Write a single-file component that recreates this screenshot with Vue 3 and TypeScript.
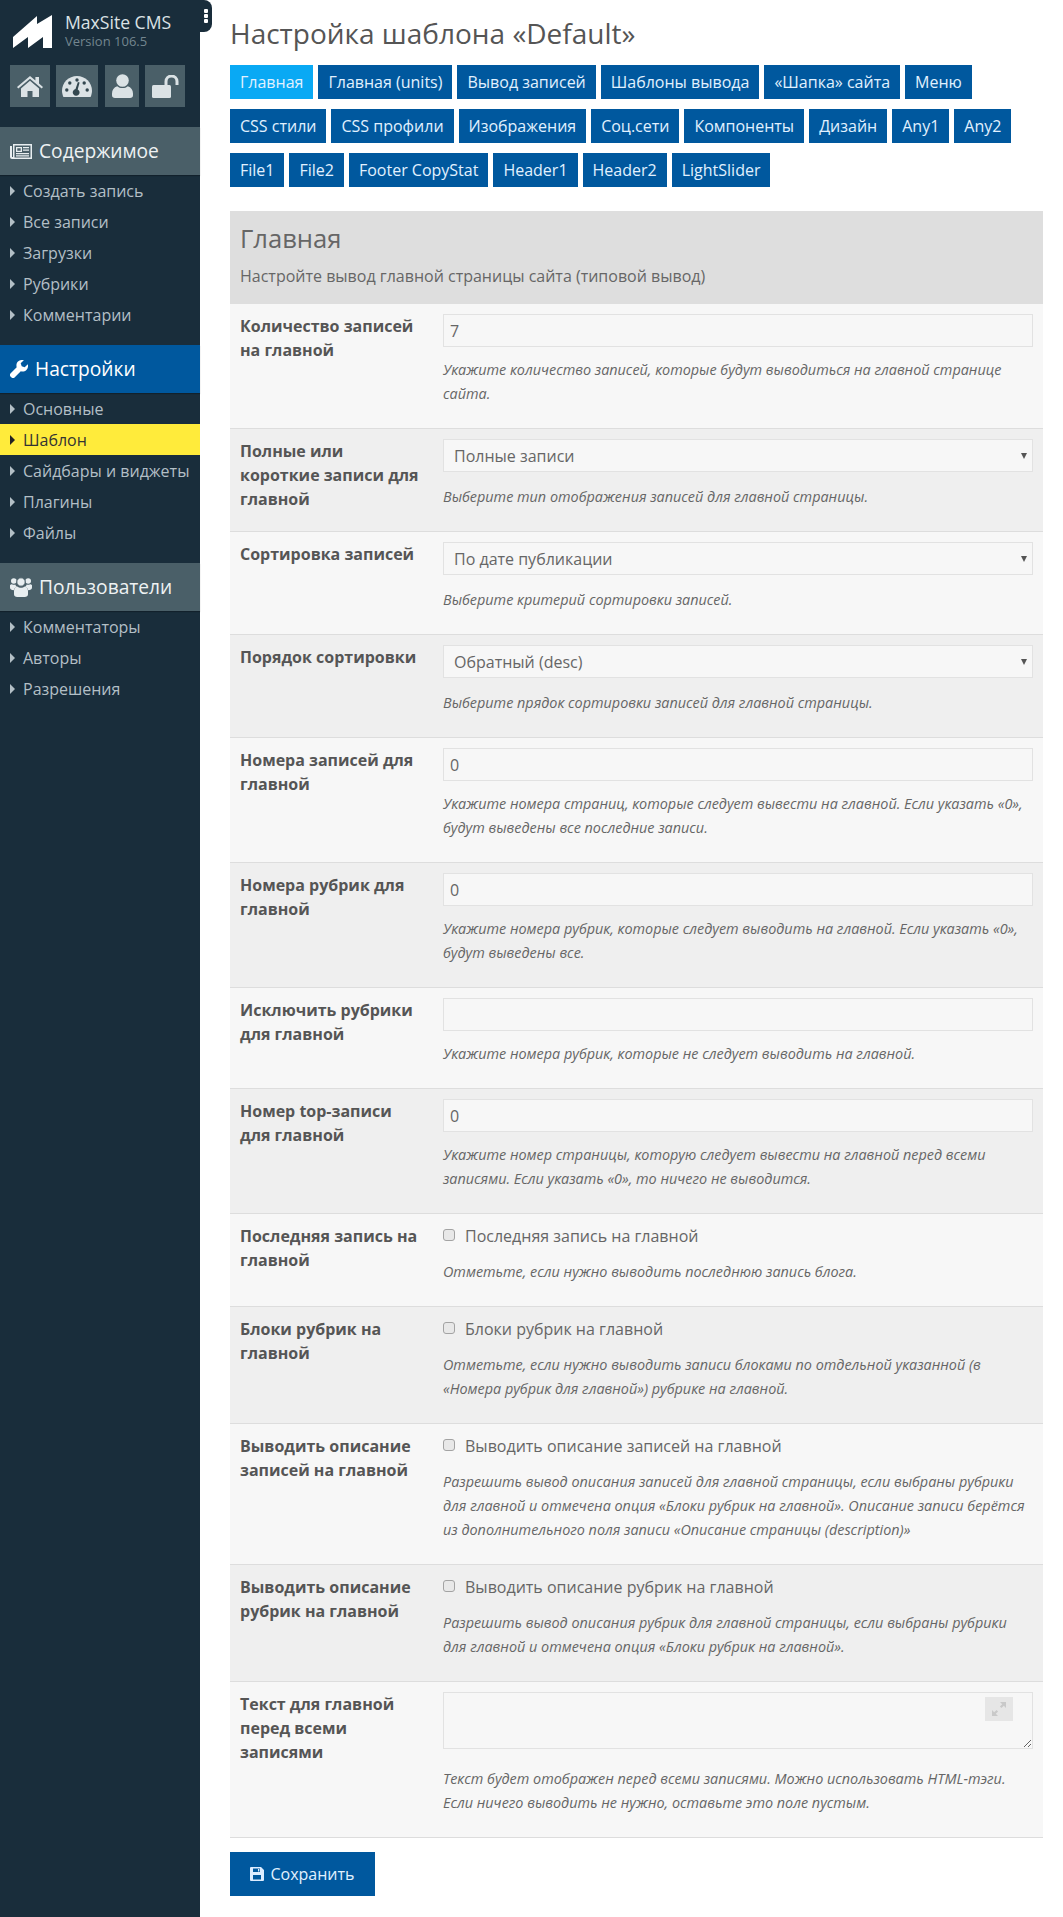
<script setup lang="ts">
interface MenuGroup { title: string; icon: string; active?: boolean; items: string[] }
interface Row {
  label: string;
  kind: 'input' | 'select' | 'check' | 'area';
  value?: string;
  hint: string;
}

const groups: MenuGroup[] = [
  { title: 'Содержимое', icon: 'news', items: ['Создать запись', 'Все записи', 'Загрузки', 'Рубрики', 'Комментарии'] },
  { title: 'Настройки', icon: 'wrench', active: true, items: ['Основные', 'Шаблон', 'Сайдбары и виджеты', 'Плагины', 'Файлы'] },
  { title: 'Пользователи', icon: 'users', items: ['Комментаторы', 'Авторы', 'Разрешения'] },
];

const tabs: string[][] = [
  ['Главная', 'Главная (units)', 'Вывод записей', 'Шаблоны вывода', '«Шапка» сайта', 'Меню'],
  ['CSS стили', 'CSS профили', 'Изображения', 'Соц.сети', 'Компоненты', 'Дизайн', 'Any1', 'Any2'],
  ['File1', 'File2', 'Footer CopyStat', 'Header1', 'Header2', 'LightSlider'],
];

const rows: Row[] = [
  { label: 'Количество записей на главной', kind: 'input', value: '7', hint: 'Укажите количество записей, которые будут выводиться на главной странице сайта.' },
  { label: 'Полные или короткие записи для главной', kind: 'select', value: 'Полные записи', hint: 'Выберите тип отображения записей для главной страницы.' },
  { label: 'Сортировка записей', kind: 'select', value: 'По дате публикации', hint: 'Выберите критерий сортировки записей.' },
  { label: 'Порядок сортировки', kind: 'select', value: 'Обратный (desc)', hint: 'Выберите прядок сортировки записей для главной страницы.' },
  { label: 'Номера записей для главной', kind: 'input', value: '0', hint: 'Укажите номера страниц, которые следует вывести на главной. Если указать «0», будут выведены все последние записи.' },
  { label: 'Номера рубрик для главной', kind: 'input', value: '0', hint: 'Укажите номера рубрик, которые следует выводить на главной. Если указать «0», будут выведены все.' },
  { label: 'Исключить рубрики для главной', kind: 'input', value: '', hint: 'Укажите номера рубрик, которые не следует выводить на главной.' },
  { label: 'Номер top-записи для главной', kind: 'input', value: '0', hint: 'Укажите номер страницы, которую следует вывести на главной перед всеми записями. Если указать «0», то ничего не выводится.' },
  { label: 'Последняя запись на главной', kind: 'check', value: 'Последняя запись на главной', hint: 'Отметьте, если нужно выводить последнюю запись блога.' },
  { label: 'Блоки рубрик на главной', kind: 'check', value: 'Блоки рубрик на главной', hint: 'Отметьте, если нужно выводить записи блоками по отдельной указанной (в «Номера рубрик для главной») рубрике на главной.' },
  { label: 'Выводить описание записей на главной', kind: 'check', value: 'Выводить описание записей на главной', hint: 'Разрешить вывод описания записей для главной страницы, если выбраны рубрики для главной и отмечена опция «Блоки рубрик на главной». Описание записи берётся из дополнительного поля записи «Описание страницы (description)»' },
  { label: 'Выводить описание рубрик на главной', kind: 'check', value: 'Выводить описание рубрик на главной', hint: 'Разрешить вывод описания рубрик для главной страницы, если выбраны рубрики для главной и отмечена опция «Блоки рубрик на главной».' },
  { label: 'Текст для главной перед всеми записями', kind: 'area', hint: 'Текст будет отображен перед всеми записями. Можно использовать HTML-тэги. Если ничего выводить не нужно, оставьте это поле пустым.' },
];
</script>

<template>
  <div class="page">
    <aside class="side">
      <div class="handle"><i></i><i></i><i></i></div>
      <div class="brand">
        <svg class="logo" viewBox="0 0 39 33" width="39" height="33">
          <path fill="#fff" d="M0 33V22L24 1v8L39 0v33H30V22L15 33V22L0 33Z" />
        </svg>
        <div class="brand-text">
          <div class="brand-name">MaxSite CMS</div>
          <div class="brand-ver">Version 106.5</div>
        </div>
      </div>
      <div class="quick">
        <a class="q q-home">
          <svg viewBox="0 0 26 21" width="26" height="21"><path fill="#dbe2e5" d="M13 0 0 11l1.300 1.600L13 2.800l11.700 9.800L26 11l-4-3.400V1h-3.600v3.500L13 0Z" /><path fill="#dbe2e5" d="M13 4.800 4 12.400V21h6.500v-6h5v6H22v-8.600L13 4.800Z" /></svg>
        </a>
        <a class="q q-gauge">
          <svg viewBox="0 0 30 21" width="30" height="21"><path fill="#dbe2e5" d="M15 0C6.700 0 0 6.500 0 14.600c0 2.300.5 4.400 1.400 6.400h27.200c.9-2 1.400-4.100 1.400-6.400C30 6.500 23.300 0 15 0Z" /><g fill="#33474f"><circle cx="15" cy="4" r="1.700" /><circle cx="7.800" cy="7" r="1.700" /><circle cx="22.200" cy="7" r="1.700" /><circle cx="4.800" cy="14" r="1.700" /><circle cx="25.200" cy="14" r="1.700" /><path d="M17.600 6.500 15.700 13.400a3.400 3.400 0 1 1-2.200-.3l2.400-7Z" /></g></svg>
        </a>
        <a class="q q-user">
          <svg viewBox="0 0 21 24" width="21" height="24"><circle cx="10.500" cy="6.500" r="6.300" fill="#dbe2e5" /><path fill="#dbe2e5" d="M5.200 12.200C2 13.200 0 15.800 0 19.600v1.600C0 23 1.200 24 3 24h15c1.800 0 3-1 3-2.800v-1.600c0-3.800-2-6.400-5.200-7.400-1.400 1.200-3.200 1.900-5.300 1.900s-3.900-.7-5.300-1.900Z" /></svg>
        </a>
        <a class="q q-lock">
          <svg viewBox="0 0 27 23" width="27" height="23"><rect x="0" y="10" width="19" height="13" rx="1.500" fill="#dbe2e5" /><path fill="none" stroke="#dbe2e5" stroke-width="3" d="M14 10V6.500a5 5 0 0 1 11 0V10" /></svg>
        </a>
      </div>

      <div v-for="g in groups" :key="g.title" class="group">
        <div class="group-head" :class="{ on: g.active }">
          <svg v-if="g.icon === 'news'" viewBox="0 0 22 15" width="22" height="15"><path fill="#e8eef0" fill-rule="evenodd" d="M3 0h19v15H2a2 2 0 0 1-2-2V2h2v11h1V0Zm1.500 1.500v12h16v-12h-16Z" /><path fill="#e8eef0" fill-rule="evenodd" d="M6 3h6v5H6V3Zm1.300 1.300v2.400h3.400V4.300H7.300ZM13 3h6v1.300h-6V3Zm0 2.400h6v1.300h-6V5.400ZM6 9h13v1.300H6V9Zm0 2.300h13v1.300H6v-1.300Z" /></svg>
          <svg v-else-if="g.icon === 'wrench'" viewBox="0 0 18 18" width="18" height="18"><path fill="#fff" d="M17.800 4.200 14.700 7.300l-3-1-1-3L13.800.2C11.700-.4 9.500.1 8 1.600 6.500 3.100 6.100 5.300 6.700 7.200L.7 13.200a2.500 2.500 0 0 0 0 3.500l.6.6a2.500 2.500 0 0 0 3.500 0l6-6c1.900.6 4.100.2 5.600-1.300s2-3.700 1.400-5.800Z" /></svg>
          <svg v-else viewBox="0 0 22 20" width="22" height="20"><g fill="#e8eef0"><circle cx="3.800" cy="4" r="2.800" /><circle cx="18.200" cy="4" r="2.800" /><circle cx="11" cy="5" r="4.200" stroke="#4a5f68" stroke-width="1" /><path d="M0 8.200C.6 7.500 1.300 7.200 2.300 7.400c1 .5 2 .5 3 .1.300 1 1 2 1.900 2.600C5 10.700 4 12 3.800 13.300 1.500 13.200 0 12.200 0 10.500V8.200ZM22 8.200c-.6-.7-1.300-1-2.300-.8-1 .5-2 .5-3 .1-.3 1-1 2-1.900 2.600 2.200.6 3.200 1.900 3.400 3.200 2.300-.1 3.800-1.100 3.800-2.800V8.200Z" /><path d="M7.200 9.500c2.200 1.800 5.400 1.800 7.600 0 2 .6 3.200 2.300 3.200 4.500v3.200c0 1.700-1.500 2.800-3.200 2.800H7.200C5.500 20 4 18.900 4 17.200V14c0-2.200 1.200-3.900 3.200-4.500Z" /></g></svg>
          <span>{{ g.title }}</span>
        </div>
        <ul class="items">
          <li v-for="it in g.items" :key="it" :class="{ cur: it === 'Шаблон' }">{{ it }}</li>
        </ul>
      </div>
    </aside>

    <main class="main">
      <h1 class="title">Настройка шаблона «Default»</h1>
      <div class="tabs">
        <div v-for="(line, i) in tabs" :key="i" class="tab-line">
          <a v-for="t in line" :key="t" class="tab" :class="{ on: t === 'Главная' }">{{ t }}</a>
        </div>
      </div>

      <section class="head">
        <h2>Главная</h2>
        <p>Настройте вывод главной страницы сайта (типовой вывод)</p>
      </section>

      <div v-for="(r, i) in rows" :key="r.label" class="row" :class="['k-' + r.kind, { alt: i % 2 === 1 }]">
        <div class="label">{{ r.label }}</div>
        <div class="field">
          <input v-if="r.kind === 'input'" class="ctl" type="text" :value="r.value" />
          <div v-else-if="r.kind === 'select'" class="sel-wrap">
            <select class="ctl sel"><option>{{ r.value }}</option></select>
          </div>
          <label v-else-if="r.kind === 'check'" class="chk"><input type="checkbox" /><span>{{ r.value }}</span></label>
          <div v-else class="area-wrap">
            <textarea class="ctl area"></textarea>
            <span class="expand">
              <svg viewBox="0 0 14 14" width="14" height="14"><path fill="#c9c9c9" d="M8 0h6v6l-2.200-2.200-2.300 2.300-1.600-1.600 2.300-2.300L8 0ZM6 14H0V8l2.200 2.200 2.300-2.300 1.600 1.600-2.300 2.300L6 14Z" /></svg>
            </span>
          </div>
          <p class="hint">{{ r.hint }}</p>
        </div>
      </div>

      <button class="save" type="button">
        <svg viewBox="0 0 14 14" width="14" height="14"><path fill="#dcecff" fill-rule="evenodd" d="M1 0h10l3 3v10a1 1 0 0 1-1 1H1a1 1 0 0 1-1-1V1a1 1 0 0 1 1-1Zm2 1.500V5h7V1.500H3Zm5 .5h1.300v2.500H8V2ZM3 8v4.500h8V8H3Z" /></svg>
        <span>Сохранить</span>
      </button>
    </main>
  </div>
</template>

<style>
html, body { margin: 0; background: #fff; }
</style>

<style scoped>
.page {
  display: flex;
  min-height: 1917px;
  font-family: "Open Sans", "Noto Sans", sans-serif;
  font-size: 16px;
  line-height: 24px;
  color: #666;
}
.side {
  width: 200px;
  flex: none;
  background: #192d3b;
  position: relative;
  padding-top: 15px;
  box-sizing: border-box;
}
.handle {
  position: absolute;
  left: 200px;
  top: 0;
  width: 12px;
  height: 32px;
  background: #192d3b;
  border-radius: 0 8px 8px 0;
  display: flex;
  flex-direction: column;
  align-items: center;
  padding-top: 9px;
  box-sizing: border-box;
  gap: 1px;
}
.handle i {
  width: 4px;
  height: 4px;
  border-radius: 1px;
  background: #fff;
}
.brand {
  display: flex;
  padding-left: 13px;
  height: 33px;
  gap: 13px;
}
.logo { flex: none; }
.brand-text { margin-top: -3px; }
.brand-name {
  color: #dbe2e5;
  font-size: 17.600px;
  line-height: 21px;
}
.brand-ver {
  color: #73868f;
  font-size: 13px;
  line-height: 16px;
}
.quick {
  display: flex;
  padding-left: 10px;
  margin-top: 17px;
  gap: 6px;
  height: 42px;
}
.q {
  background: #4a5f68;
  height: 42px;
  display: flex;
  align-items: center;
  justify-content: center;
}
.q-home { width: 40px; }
.q-gauge { width: 42px; }
.q-user { width: 34px; margin-left: 1px; }
.q-lock { width: 40px; }
.group { margin-top: 15px; }
.quick + .group { margin-top: 20px; }
.group-head {
  height: 48px;
  background: #4a5f68;
  color: #eef2f3;
  display: flex;
  align-items: center;
  padding-left: 10px;
  gap: 7px;
  font-size: 19.200px;
  box-shadow: 0 1px 1px rgba(0, 0, 0, .25);
}
.group-head.on {
  background: #00589e;
  color: #fff;
}
.items {
  list-style: none;
  margin: 0;
  padding: 0;
}
.items li {
  height: 31px;
  line-height: 33px;
  padding-left: 23px;
  color: #b3bfc6;
  position: relative;
}
.items li::before {
  content: "";
  position: absolute;
  left: 10px;
  top: 11px;
  border-left: 5px solid #b3bfc6;
  border-top: 5px solid transparent;
  border-bottom: 5px solid transparent;
}
.items li.cur {
  background: #ffeb3b;
  color: #333;
}
.items li.cur::before { border-left-color: #222; }

.main {
  width: 813px;
  margin-left: 30px;
  flex: none;
}
.title {
  margin: 0;
  padding-top: 14px;
  font-size: 28px;
  line-height: 38px;
  font-weight: 400;
  color: #555;
}
.tabs {
  margin-top: 13px;
  display: flex;
  flex-direction: column;
  gap: 10px;
}
.tab-line {
  display: flex;
  gap: 5px;
}
.tab {
  height: 34px;
  line-height: 34px;
  padding: 0 10px;
  background: #00589e;
  color: #e1f1ff;
}
.tab.on { background: #09a9f4; }
.head {
  margin-top: 24px;
  height: 93px;
  background: #dedede;
  padding: 9px 10px 0;
  box-sizing: border-box;
}
.head h2 {
  margin: 0;
  font-size: 25.600px;
  font-weight: 400;
  line-height: 38px;
  color: #666;
}
.head p {
  margin: 6px 0 0;
  color: #666;
}
.row {
  display: flex;
  padding: 10px 10px 12px;
  background: #f7f7f7;
  border-bottom: 1px solid #ddd;
}
.row.alt { background: #efefef; }
.label {
  width: 180px;
  margin-right: 23px;
  flex: none;
  font-weight: 700;
  color: #555;
}
.field {
  flex: 1;
  min-width: 0;
  padding-bottom: 10px;
}
.ctl {
  display: block;
  width: 100%;
  height: 33px;
  box-sizing: border-box;
  border: 1px solid #e2e2e2;
  background: #f7f7f7;
  font: 16px "Open Sans", "Noto Sans", sans-serif;
  color: #666;
  padding: 0 6px;
  outline: none;
  border-radius: 0;
}
.sel-wrap { position: relative; }
.sel {
  appearance: none;
  -webkit-appearance: none;
  padding-left: 10px;
}
.sel-wrap::after {
  content: "";
  position: absolute;
  right: 6px;
  top: 14px;
  border-top: 6px solid #555;
  border-left: 3px solid transparent;
  border-right: 3px solid transparent;
  pointer-events: none;
}
.hint {
  margin: 11px 0 0;
  font-size: 14.400px;
  font-style: italic;
  color: #666;
}
.k-select .hint { margin-top: 13px; }
.k-check .hint { margin-top: 12px; }
.k-area .hint { margin-top: 18px; }
.chk {
  display: flex;
  align-items: center;
  height: 24px;
  gap: 10px;
}
.chk input {
  appearance: none;
  -webkit-appearance: none;
  margin: 0;
  width: 12px;
  height: 12px;
  flex: none;
  position: relative;
  top: -1px;
  box-sizing: border-box;
  border: 1px solid #a3a3a3;
  border-radius: 3px;
  background: #e8e8e8;
}
.area-wrap { position: relative; }
.area {
  height: 57px;
  resize: vertical;
}
.expand {
  position: absolute;
  right: 20px;
  top: 5px;
  width: 28px;
  height: 24px;
  background: #e6e6e6;
  display: flex;
  align-items: center;
  justify-content: center;
}
.save {
  display: flex;
  align-items: center;
  justify-content: center;
  gap: 6px;
  margin-top: 14px;
  width: 145px;
  height: 44px;
  border: 0;
  padding: 0;
  background: #00589e;
  color: #e1f1ff;
  font: 16px "Open Sans", "Noto Sans", sans-serif;
}
</style>
